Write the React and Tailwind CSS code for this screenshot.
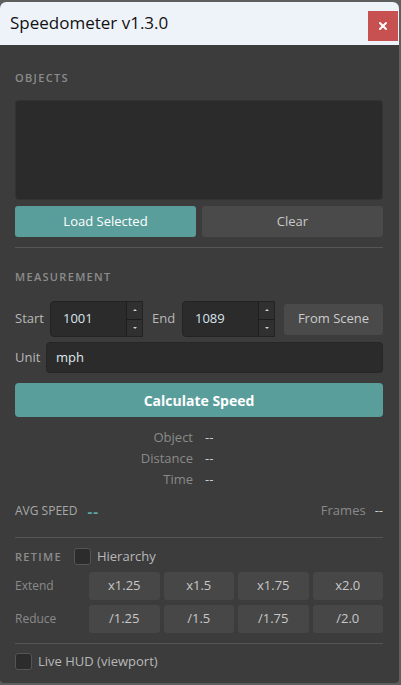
import { X } from "lucide-react";

const FONT = { fontFamily: '"Open Sans", "Noto Sans", "Liberation Sans", sans-serif' };

function SectionLabel({ children }) {
  return (
    <div className="text-[11px] font-semibold tracking-[0.12em] text-[#8c8c8c] leading-none">
      {children}
    </div>
  );
}

function Divider() {
  return <div className="h-px bg-[#555555]" />;
}

function Spin({ value }) {
  return (
    <div className="flex h-[36px] w-[93px] rounded-l-[4px] border border-[#232323] bg-[#2b2b2b]">
      <div className="flex flex-1 items-center pl-[12px] text-[13px] text-[#d8e4ee]">{value}</div>
      <div className="flex w-[16px] flex-col border-l border-[#1e1e1e]">
        <div className="flex flex-1 items-center justify-center border-b border-[#1e1e1e] bg-[#303030]">
          <span className="block h-0 w-0 border-x-[2px] border-b-[2px] border-x-transparent border-b-[#cfcfcf]" />
        </div>
        <div className="flex flex-1 items-center justify-center bg-[#303030]">
          <span className="block h-0 w-0 border-x-[2px] border-t-[2px] border-x-transparent border-t-[#cfcfcf]" />
        </div>
      </div>
    </div>
  );
}

function Check({ label }) {
  return (
    <label className="flex items-center gap-[6px]">
      <span className="block h-[17px] w-[17px] rounded-[3px] border border-[#555555] bg-[#2c2c2c]" />
      <span className="text-[13px] text-[#b8b8b8]">{label}</span>
    </label>
  );
}

function GridBtn({ children }) {
  return (
    <button className="flex h-[28px] items-center justify-center rounded-[3px] bg-[#474747] text-[13px] text-[#c8c8c8]">
      {children}
    </button>
  );
}

export default function App() {
  const stats = [
    ["Object", "--"],
    ["Distance", "--"],
    ["Time", "--"],
  ];

  return (
    <div className="h-[685px] w-[401px] bg-[#5e5e5e] pt-[2px] pr-[2px]" style={FONT}>
      <div className="flex h-[681px] w-[399px] flex-col overflow-hidden rounded-t-[6px] rounded-b-[4px] bg-[#3c3c3c]">
        {/* title bar */}
        <div className="flex h-[43px] shrink-0 items-start justify-between bg-[#eef3fa] pl-[10px]">
          <span className="mt-[9px] text-[17px] leading-[24px] text-[#111111]">Speedometer v1.3.0</span>
          <button className="mt-[9px] mr-[1px] flex h-[30px] w-[30px] items-center justify-center bg-[#c75050]">
            <X className="h-[12px] w-[12px] text-white" strokeWidth={4} />
          </button>
        </div>

        <div className="flex flex-col px-[15px] pr-[16px]">
          {/* objects */}
          <div className="pt-[27px]">
            <SectionLabel>OBJECTS</SectionLabel>
          </div>
          <div className="mt-[17px] h-[100px] rounded-[4px] border border-[#333333] bg-[#2b2b2b]" />
          <div className="mt-[6px] grid grid-cols-2 gap-[6px]">
            <button className="h-[31px] rounded-[3px] bg-[#5a9e9c] text-[13px] font-medium text-white">
              Load Selected
            </button>
            <button className="h-[31px] rounded-[3px] bg-[#4a4a4a] text-[13px] text-[#c8c8c8]">
              Clear
            </button>
          </div>
          <div className="mt-[10px]">
            <Divider />
          </div>

          {/* measurement */}
          <div className="pt-[23px]">
            <SectionLabel>MEASUREMENT</SectionLabel>
          </div>
          <div className="mt-[19px] flex items-center">
            <span className="w-[35px] text-[13px] text-[#b8b8b8]">Start</span>
            <Spin value="1001" />
            <span className="ml-[9px] w-[30px] text-[13px] text-[#b8b8b8]">End</span>
            <Spin value="1089" />
            <button className="ml-[9px] h-[31px] flex-1 rounded-[3px] bg-[#4a4a4a] text-[13px] text-[#cccccc]">
              From Scene
            </button>
          </div>
          <div className="mt-[5px] flex items-center">
            <span className="w-[31px] text-[13px] text-[#b8b8b8]">Unit</span>
            <div className="flex h-[31px] flex-1 items-center rounded-[4px] border border-[#262626] bg-[#2b2b2b] pl-[9px] text-[13px] text-[#dfe6ec]">
              mph
            </div>
          </div>
          <button className="mt-[10px] h-[34px] rounded-[4px] bg-[#5a9e9c] text-[14px] font-bold text-white">
            Calculate Speed
          </button>

          {/* stats */}
          <div className="mt-[10px] flex flex-col">
            {stats.map(([k, v]) => (
              <div key={k} className="flex h-[21px] items-center">
                <span className="w-[178px] text-right text-[13px] text-[#8a8a8a]">{k}</span>
                <span className="ml-[12px] text-[13px] text-[#cccccc]">{v}</span>
              </div>
            ))}
          </div>
          <div className="mt-[11px] flex h-[20px] items-center">
            <span className="text-[12px] text-[#a8a8a8]">AVG SPEED</span>
            <span className="ml-[10px] text-[15px] font-bold tracking-[1px] text-[#5aa8a6]">--</span>
            <span className="ml-auto text-[13px] text-[#8a8a8a]">Frames</span>
            <span className="ml-[9px] text-[13px] text-[#cccccc]">--</span>
          </div>
          <div className="mt-[16px]">
            <Divider />
          </div>

          {/* retime */}
          <div className="mt-[9px] flex items-center">
            <SectionLabel>RETIME</SectionLabel>
            <div className="ml-[12px]">
              <Check label="Hierarchy" />
            </div>
          </div>
          <div className="mt-[5px] grid grid-cols-[70px_1fr_1fr_1fr_1fr] gap-x-[4px] gap-y-[5px]">
            <span className="flex items-center text-[12px] text-[#8a8a8a]">Extend</span>
            <GridBtn>x1.25</GridBtn>
            <GridBtn>x1.5</GridBtn>
            <GridBtn>x1.75</GridBtn>
            <GridBtn>x2.0</GridBtn>
            <span className="flex items-center text-[12px] text-[#8a8a8a]">Reduce</span>
            <GridBtn>/1.25</GridBtn>
            <GridBtn>/1.5</GridBtn>
            <GridBtn>/1.75</GridBtn>
            <GridBtn>/2.0</GridBtn>
          </div>
          <div className="mt-[10px]">
            <Divider />
          </div>
          <div className="mt-[8px]">
            <Check label="Live HUD (viewport)" />
          </div>
        </div>
      </div>
    </div>
  );
}
